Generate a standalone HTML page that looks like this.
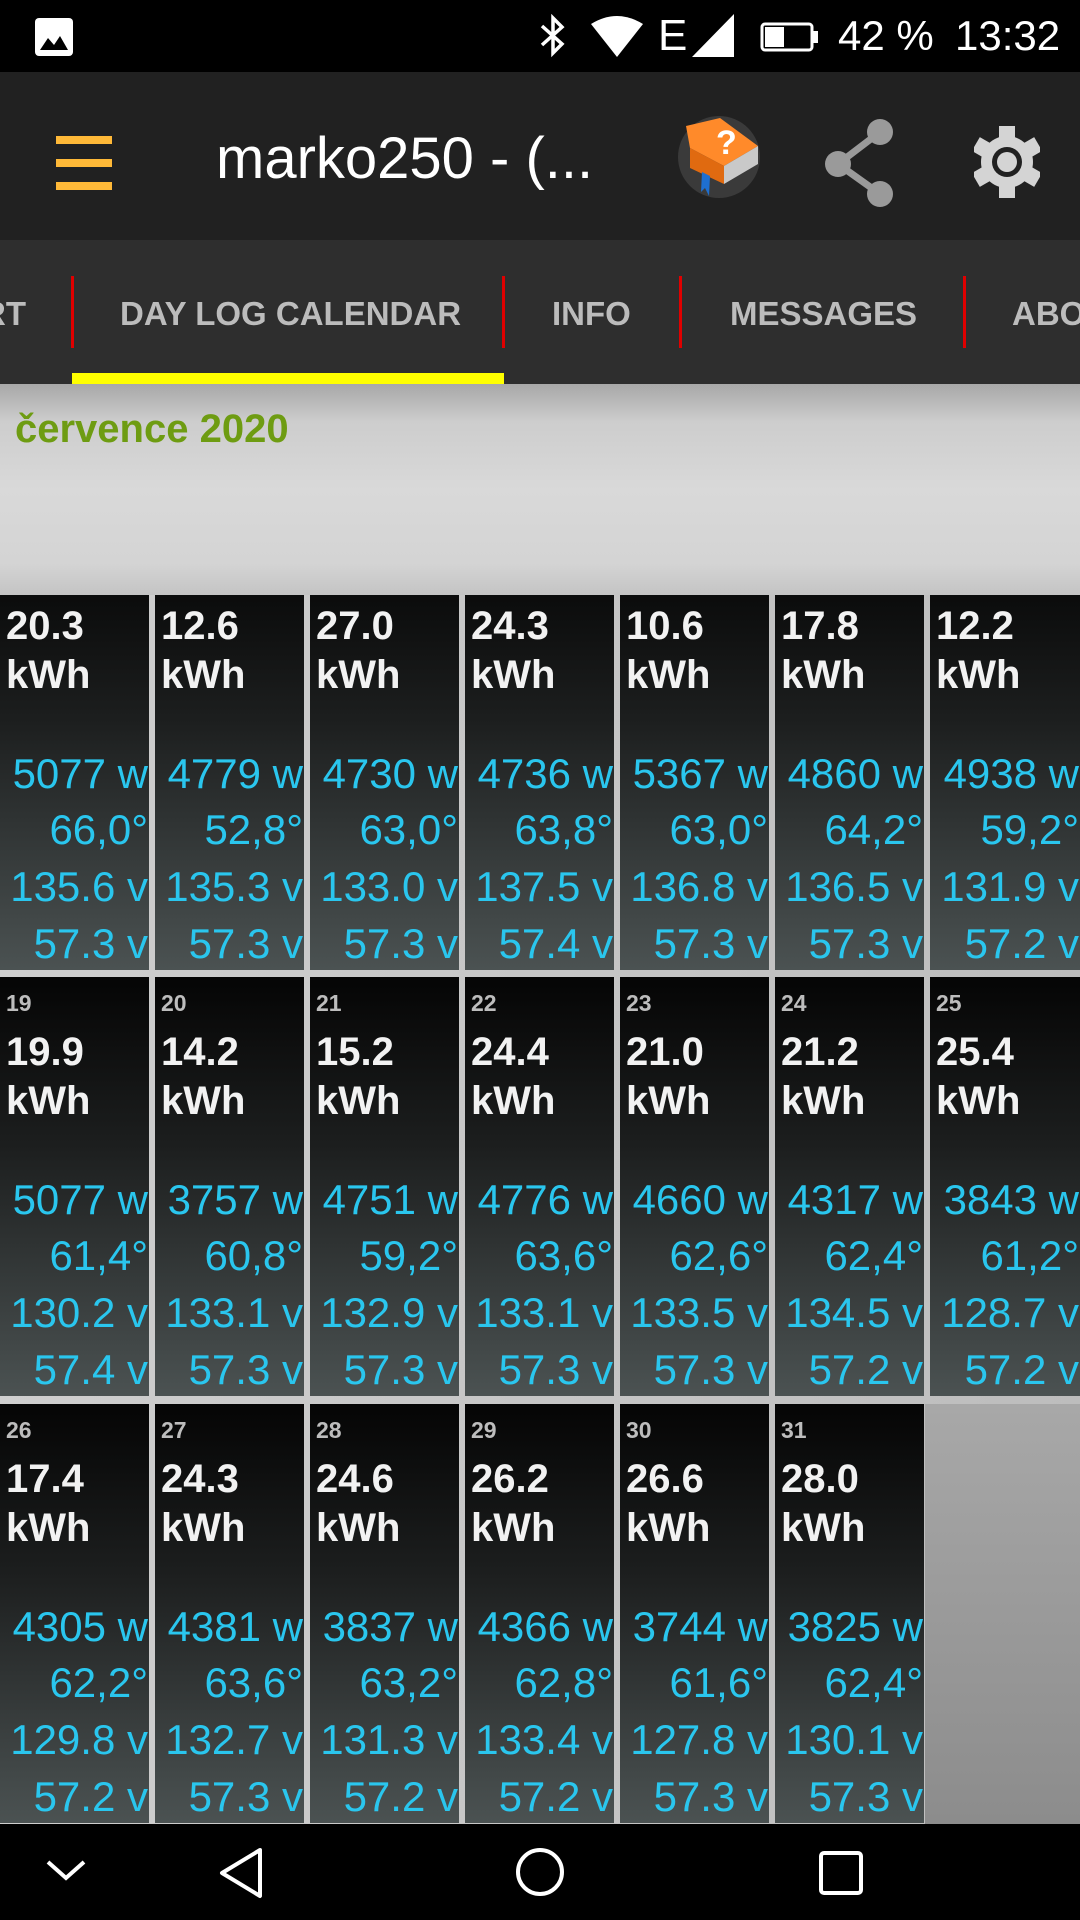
<!DOCTYPE html>
<html><head><meta charset="utf-8"><style>
*{margin:0;padding:0;box-sizing:border-box}
body{width:1080px;height:1920px;overflow:hidden;background:#c9c9c9;font-family:"Liberation Sans",sans-serif;position:relative}
.abs{position:absolute}
#status{left:0;top:0;width:1080px;height:72px;background:#000;color:#fff}
#bar{left:0;top:72px;width:1080px;height:168px;background:#212121}
#tabs{left:0;top:240px;width:1080px;height:144px;background:#2e2e2e}
.tab{position:absolute;top:52px;font-size:33px;font-weight:bold;color:#bcbcbc;line-height:44px}
.div{position:absolute;top:36px;width:3px;height:72px;background:#e00000}
#metal{left:0;top:384px;width:1080px;height:211px;background:linear-gradient(180deg,#a8a8a8 0%,#cdcdcd 18%,#d9d9d9 50%,#d4d4d4 85%,#c4c4c4 100%)}
#grid{left:0;top:595px;width:1080px;height:1229px;overflow:hidden;background:linear-gradient(90deg,#cfcfcf,#bdbdbd)}
.cell{position:absolute;width:149px;height:419px;background:linear-gradient(180deg,#050505 0%,#1c1e1e 40%,#4b5252 100%);overflow:hidden}
.cell div{position:absolute;left:0;right:0;line-height:50px;white-space:nowrap}
.d{top:1px;left:6px!important;font-size:23px;font-weight:bold;color:#bdbdbd}
.k{left:6px!important;font-size:40px;font-weight:bold;color:#f2f2f2}
.b{text-align:right;padding-right:1px;font-size:42px;color:#2ac6ee}
#nav{left:0;top:1824px;width:1080px;height:96px;background:#000}
</style></head><body>
<div id="status" class="abs">
<svg class="abs" style="left:34px;top:18px" width="40" height="38"><rect x="1" y="0" width="38" height="38" rx="4" fill="#fff"/><path d="M6 32 L14 20 L20 27 L26 18 L34 32Z" fill="#000"/></svg>
<svg class="abs" style="left:538px;top:14px" width="30" height="44"><path d="M4 12 L24 30 L15 39 L15 4 L24 13 L4 31" stroke="#fff" stroke-width="3.5" fill="none"/></svg>
<svg class="abs" style="left:590px;top:14px" width="54" height="44"><path d="M1 10 Q27 -6 53 10 L27 43Z" fill="#fff"/></svg>
<div class="abs" style="left:658px;top:8px;font-size:44px;line-height:56px">E</div>
<svg class="abs" style="left:692px;top:14px" width="44" height="44"><path d="M42 0 L42 43 L0 43Z" fill="#fff"/></svg>
<svg class="abs" style="left:760px;top:22px" width="60" height="30"><rect x="2" y="2" width="50" height="26" rx="3" fill="none" stroke="#fff" stroke-width="3"/><rect x="5" y="5" width="19" height="20" fill="#fff"/><rect x="53" y="9" width="5" height="12" fill="#fff"/></svg>
<div class="abs" style="left:838px;top:6px;font-size:42px;line-height:60px">42 %</div>
<div class="abs" style="left:955px;top:6px;font-size:42px;line-height:60px">13:32</div>
</div>
<div id="bar" class="abs">
<div class="abs" style="left:56px;top:64px;width:56px;height:8px;background:#ffb938"></div>
<div class="abs" style="left:56px;top:87px;width:56px;height:8px;background:#ffb938"></div>
<div class="abs" style="left:56px;top:110px;width:56px;height:8px;background:#ffb938"></div>
<div class="abs" style="left:216px;top:52px;font-size:58px;line-height:70px;color:#fff">marko250 - (...</div>
<svg class="abs" style="left:676px;top:40px" width="88" height="100"><circle cx="43" cy="45" r="41" fill="#3a3a3a"/><path d="M10 14 L44 6 L82 34 L48 54 L14 36Z" fill="#ff8a2a"/><path d="M14 36 L48 54 L48 72 L14 56Z" fill="#e06a10"/><path d="M48 54 L82 34 L82 52 L48 72Z" fill="#c9c9c9"/><path d="M26 60 L34 64 L33 84 L29 76 L25 80Z" fill="#1e6fd0"/><text x="40" y="42" font-size="34" font-weight="bold" fill="#fff" font-family="Liberation Sans">?</text></svg>
<svg class="abs" style="left:822px;top:46px" width="76" height="90"><path d="M58 14 L16 46 L58 76" stroke="#9a9a9a" stroke-width="7" fill="none"/><circle cx="58" cy="14" r="13" fill="#9a9a9a"/><circle cx="16" cy="46" r="13" fill="#9a9a9a"/><circle cx="58" cy="76" r="13" fill="#9a9a9a"/></svg>
<svg class="abs" style="left:974px;top:52px" width="66" height="76" viewBox="-33 -38 66 76"><g fill="#d4d4d4"><circle r="26"/><rect x="-8" y="-36" width="16" height="72"/><rect x="-8" y="-36" width="16" height="72" transform="rotate(60)"/><rect x="-8" y="-36" width="16" height="72" transform="rotate(120)"/></g><circle r="15" fill="#212121"/><circle r="10" fill="#d4d4d4"/></svg>
</div>
<div id="tabs" class="abs">
<div class="tab" style="left:-18px">RT</div>
<div class="div" style="left:71px"></div>
<div class="tab" style="left:120px">DAY LOG CALENDAR</div>
<div class="div" style="left:502px"></div>
<div class="tab" style="left:552px">INFO</div>
<div class="div" style="left:679px"></div>
<div class="tab" style="left:730px">MESSAGES</div>
<div class="div" style="left:963px"></div>
<div class="tab" style="left:1012px">ABOUT</div>
<div class="abs" style="left:72px;top:133px;width:432px;height:11px;background:#ffff00"></div>
</div>
<div id="metal" class="abs"><div class="abs" style="left:15px;top:20px;font-size:40px;font-weight:bold;color:#6e9c12;line-height:50px">července 2020</div></div>
<div id="grid" class="abs">
<div class="cell" style="left:0;top:-44px"><div class="k" style="top:50px">20.3</div><div class="k" style="top:99px">kWh</div><div class="b" style="top:198px">5077 w</div><div class="b" style="top:254px">66,0°</div><div class="b" style="top:311px">135.6 v</div><div class="b" style="top:368px">57.3 v</div></div>
<div class="cell" style="left:155px;top:-44px"><div class="k" style="top:50px">12.6</div><div class="k" style="top:99px">kWh</div><div class="b" style="top:198px">4779 w</div><div class="b" style="top:254px">52,8°</div><div class="b" style="top:311px">135.3 v</div><div class="b" style="top:368px">57.3 v</div></div>
<div class="cell" style="left:310px;top:-44px"><div class="k" style="top:50px">27.0</div><div class="k" style="top:99px">kWh</div><div class="b" style="top:198px">4730 w</div><div class="b" style="top:254px">63,0°</div><div class="b" style="top:311px">133.0 v</div><div class="b" style="top:368px">57.3 v</div></div>
<div class="cell" style="left:465px;top:-44px"><div class="k" style="top:50px">24.3</div><div class="k" style="top:99px">kWh</div><div class="b" style="top:198px">4736 w</div><div class="b" style="top:254px">63,8°</div><div class="b" style="top:311px">137.5 v</div><div class="b" style="top:368px">57.4 v</div></div>
<div class="cell" style="left:620px;top:-44px"><div class="k" style="top:50px">10.6</div><div class="k" style="top:99px">kWh</div><div class="b" style="top:198px">5367 w</div><div class="b" style="top:254px">63,0°</div><div class="b" style="top:311px">136.8 v</div><div class="b" style="top:368px">57.3 v</div></div>
<div class="cell" style="left:775px;top:-44px"><div class="k" style="top:50px">17.8</div><div class="k" style="top:99px">kWh</div><div class="b" style="top:198px">4860 w</div><div class="b" style="top:254px">64,2°</div><div class="b" style="top:311px">136.5 v</div><div class="b" style="top:368px">57.3 v</div></div>
<div class="cell" style="left:930px;top:-44px;width:150px"><div class="k" style="top:50px">12.2</div><div class="k" style="top:99px">kWh</div><div class="b" style="top:198px">4938 w</div><div class="b" style="top:254px">59,2°</div><div class="b" style="top:311px">131.9 v</div><div class="b" style="top:368px">57.2 v</div></div>
<div class="cell" style="left:0;top:382px"><div class="d">19</div><div class="k" style="top:50px">19.9</div><div class="k" style="top:99px">kWh</div><div class="b" style="top:198px">5077 w</div><div class="b" style="top:254px">61,4°</div><div class="b" style="top:311px">130.2 v</div><div class="b" style="top:368px">57.4 v</div></div>
<div class="cell" style="left:155px;top:382px"><div class="d">20</div><div class="k" style="top:50px">14.2</div><div class="k" style="top:99px">kWh</div><div class="b" style="top:198px">3757 w</div><div class="b" style="top:254px">60,8°</div><div class="b" style="top:311px">133.1 v</div><div class="b" style="top:368px">57.3 v</div></div>
<div class="cell" style="left:310px;top:382px"><div class="d">21</div><div class="k" style="top:50px">15.2</div><div class="k" style="top:99px">kWh</div><div class="b" style="top:198px">4751 w</div><div class="b" style="top:254px">59,2°</div><div class="b" style="top:311px">132.9 v</div><div class="b" style="top:368px">57.3 v</div></div>
<div class="cell" style="left:465px;top:382px"><div class="d">22</div><div class="k" style="top:50px">24.4</div><div class="k" style="top:99px">kWh</div><div class="b" style="top:198px">4776 w</div><div class="b" style="top:254px">63,6°</div><div class="b" style="top:311px">133.1 v</div><div class="b" style="top:368px">57.3 v</div></div>
<div class="cell" style="left:620px;top:382px"><div class="d">23</div><div class="k" style="top:50px">21.0</div><div class="k" style="top:99px">kWh</div><div class="b" style="top:198px">4660 w</div><div class="b" style="top:254px">62,6°</div><div class="b" style="top:311px">133.5 v</div><div class="b" style="top:368px">57.3 v</div></div>
<div class="cell" style="left:775px;top:382px"><div class="d">24</div><div class="k" style="top:50px">21.2</div><div class="k" style="top:99px">kWh</div><div class="b" style="top:198px">4317 w</div><div class="b" style="top:254px">62,4°</div><div class="b" style="top:311px">134.5 v</div><div class="b" style="top:368px">57.2 v</div></div>
<div class="cell" style="left:930px;top:382px;width:150px"><div class="d">25</div><div class="k" style="top:50px">25.4</div><div class="k" style="top:99px">kWh</div><div class="b" style="top:198px">3843 w</div><div class="b" style="top:254px">61,2°</div><div class="b" style="top:311px">128.7 v</div><div class="b" style="top:368px">57.2 v</div></div>
<div class="cell" style="left:0;top:809px"><div class="d">26</div><div class="k" style="top:50px">17.4</div><div class="k" style="top:99px">kWh</div><div class="b" style="top:198px">4305 w</div><div class="b" style="top:254px">62,2°</div><div class="b" style="top:311px">129.8 v</div><div class="b" style="top:368px">57.2 v</div></div>
<div class="cell" style="left:155px;top:809px"><div class="d">27</div><div class="k" style="top:50px">24.3</div><div class="k" style="top:99px">kWh</div><div class="b" style="top:198px">4381 w</div><div class="b" style="top:254px">63,6°</div><div class="b" style="top:311px">132.7 v</div><div class="b" style="top:368px">57.3 v</div></div>
<div class="cell" style="left:310px;top:809px"><div class="d">28</div><div class="k" style="top:50px">24.6</div><div class="k" style="top:99px">kWh</div><div class="b" style="top:198px">3837 w</div><div class="b" style="top:254px">63,2°</div><div class="b" style="top:311px">131.3 v</div><div class="b" style="top:368px">57.2 v</div></div>
<div class="cell" style="left:465px;top:809px"><div class="d">29</div><div class="k" style="top:50px">26.2</div><div class="k" style="top:99px">kWh</div><div class="b" style="top:198px">4366 w</div><div class="b" style="top:254px">62,8°</div><div class="b" style="top:311px">133.4 v</div><div class="b" style="top:368px">57.2 v</div></div>
<div class="cell" style="left:620px;top:809px"><div class="d">30</div><div class="k" style="top:50px">26.6</div><div class="k" style="top:99px">kWh</div><div class="b" style="top:198px">3744 w</div><div class="b" style="top:254px">61,6°</div><div class="b" style="top:311px">127.8 v</div><div class="b" style="top:368px">57.3 v</div></div>
<div class="cell" style="left:775px;top:809px"><div class="d">31</div><div class="k" style="top:50px">28.0</div><div class="k" style="top:99px">kWh</div><div class="b" style="top:198px">3825 w</div><div class="b" style="top:254px">62,4°</div><div class="b" style="top:311px">130.1 v</div><div class="b" style="top:368px">57.3 v</div></div>
<div class="abs" style="left:925px;top:809px;width:155px;height:420px;background:linear-gradient(180deg,#a8a8a8,#8c8c8c)"></div>
</div>
<div id="nav" class="abs">
<svg class="abs" style="left:44px;top:32px" width="44" height="30"><path d="M4 6 L22 22 L40 6" stroke="#fff" stroke-width="4" fill="none"/></svg>
<svg class="abs" style="left:216px;top:22px" width="50" height="54"><path d="M44 4 L6 27 L44 50Z" stroke="#fff" stroke-width="4" fill="none" stroke-linejoin="round"/></svg>
<svg class="abs" style="left:514px;top:22px" width="52" height="52"><circle cx="26" cy="26" r="22" stroke="#fff" stroke-width="4" fill="none"/></svg>
<svg class="abs" style="left:818px;top:26px" width="46" height="46"><rect x="3" y="3" width="40" height="40" rx="3" stroke="#fff" stroke-width="4" fill="none"/></svg>
</div>
</body></html>
